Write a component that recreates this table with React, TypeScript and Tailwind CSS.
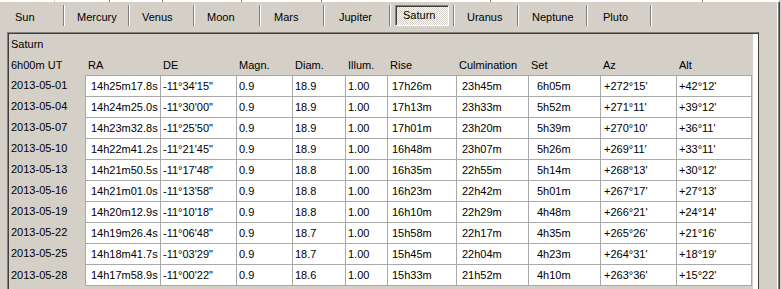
import React from "react";

type Col = { label: string; w: string; pl: string };

const cols: Col[] = [
  { label: "RA", w: "w-[75px]", pl: "pl-[5px]" },
  { label: "DE", w: "w-[76px]", pl: "pl-[2px]" },
  { label: "Magn.", w: "w-[56px]", pl: "pl-[2px]" },
  { label: "Diam.", w: "w-[53px]", pl: "pl-[2px]" },
  { label: "Illum.", w: "w-[42px]", pl: "pl-[2px]" },
  { label: "Rise", w: "w-[69px]", pl: "pl-[4px]" },
  { label: "Culmination", w: "w-[72px]", pl: "pl-[5px]" },
  { label: "Set", w: "w-[72px]", pl: "pl-[8px]" },
  { label: "Az", w: "w-[76px]", pl: "pl-[3px]" },
  { label: "Alt", w: "w-[76px]", pl: "pl-[2px]" },
];

const rows: string[][] = [
  ["2013-05-01", "14h25m17.8s", "-11°34'15\"", "0.9", "18.9", "1.00", "17h26m", "23h45m", "6h05m", "+272°15'", "+42°12'"],
  ["2013-05-04", "14h24m25.0s", "-11°30'00\"", "0.9", "18.9", "1.00", "17h13m", "23h33m", "5h52m", "+271°11'", "+39°12'"],
  ["2013-05-07", "14h23m32.8s", "-11°25'50\"", "0.9", "18.9", "1.00", "17h01m", "23h20m", "5h39m", "+270°10'", "+36°11'"],
  ["2013-05-10", "14h22m41.2s", "-11°21'45\"", "0.9", "18.9", "1.00", "16h48m", "23h07m", "5h26m", "+269°11'", "+33°11'"],
  ["2013-05-13", "14h21m50.5s", "-11°17'48\"", "0.9", "18.8", "1.00", "16h35m", "22h55m", "5h14m", "+268°13'", "+30°12'"],
  ["2013-05-16", "14h21m01.0s", "-11°13'58\"", "0.9", "18.8", "1.00", "16h23m", "22h42m", "5h01m", "+267°17'", "+27°13'"],
  ["2013-05-19", "14h20m12.9s", "-11°10'18\"", "0.9", "18.8", "1.00", "16h10m", "22h29m", "4h48m", "+266°21'", "+24°14'"],
  ["2013-05-22", "14h19m26.4s", "-11°06'48\"", "0.9", "18.7", "1.00", "15h58m", "22h17m", "4h35m", "+265°26'", "+21°16'"],
  ["2013-05-25", "14h18m41.7s", "-11°03'29\"", "0.9", "18.7", "1.00", "15h45m", "22h04m", "4h23m", "+264°31'", "+18°19'"],
  ["2013-05-28", "14h17m58.9s", "-11°00'22\"", "0.9", "18.6", "1.00", "15h33m", "21h52m", "4h10m", "+263°36'", "+15°22'"],
];

const tabs = [
  { label: "Sun", w: "w-[60px]", pl: "pl-[12px]" },
  { label: "Mercury", w: "w-[63px]", pl: "pl-[12px]" },
  { label: "Venus", w: "w-[63px]", pl: "pl-[12px]" },
  { label: "Moon", w: "w-[64px]", pl: "pl-[12px]" },
  { label: "Mars", w: "w-[62px]", pl: "pl-[13px]" },
  { label: "Jupiter", w: "w-[64px]", pl: "pl-[14px]" },
  { label: "Saturn", w: "w-[62px]", pl: "pl-[4px]", active: true },
  { label: "Uranus", w: "w-[62px]", pl: "pl-[12px]" },
  { label: "Neptune", w: "w-[67px]", pl: "pl-[13px]" },
  { label: "Pluto", w: "w-[62px]", pl: "pl-[15px]" },
];

// bottoms of the cut-off tab row above
const topSegments = [
  { w: "w-[54px]", tick: "bg-[#d4d0c8]" },
  { w: "w-[54px]", tick: "bg-[#808080]" },
  { w: "w-[52px]", tick: "bg-[#808080]" },
  { w: "w-[78px]", tick: "bg-[#808080]" },
  { w: "w-[79px]", tick: "bg-[#808080]" },
  { w: "w-[168px]", tick: "bg-[#808080]" },
  { w: "w-[211px]", tick: "bg-[#808080]" },
  { w: "w-[76px]", tick: "" },
];

function Separator() {
  return <div className="h-[21px] w-[2px] shrink-0 border-l border-r border-l-[#808080] border-r-white" />;
}

export default function App() {
  return (
    <div
      className="h-[289px] w-[782px] overflow-hidden bg-[#d4d0c8] text-[11px] text-black"
      style={{ fontFamily: '"Liberation Sans", Arial, sans-serif' }}
    >
      <div className="flex h-[2px]">
        {topSegments.map((s, i) => (
          <React.Fragment key={i}>
            <div className={`h-full shrink-0 bg-white ${s.w}`} />
            {s.tick && <div className={`h-full w-[1px] shrink-0 ${s.tick}`} />}
          </React.Fragment>
        ))}
      </div>

      <div className="flex h-[287px]">
        <div className="flex w-[777px] shrink-0 flex-col">
          {/* planet tabs */}
          <div className="flex h-[30px] shrink-0 items-start pl-[3px] pt-[3px]">
            {tabs.map((t) => (
              <React.Fragment key={t.label}>
                {t.active ? (
                  <div className={`h-[21px] shrink-0 ${t.w} ${t.pl}`}>
                    <div className="h-[21px] w-[54px] border-l border-t border-b border-r border-l-[#808080] border-t-[#808080] border-b-white border-r-white">
                      <div className="flex h-full items-center border-l border-t border-[#404040] bg-[repeating-conic-gradient(#ffffff_0%_25%,#d4d0c8_0%_50%)] bg-[length:2px_2px] pl-[6px] pb-[1px]">
                        {t.label}
                      </div>
                    </div>
                  </div>
                ) : (
                  <div className={`flex h-[21px] shrink-0 items-center pt-[3px] ${t.w} ${t.pl}`}>
                    {t.label}
                  </div>
                )}
                <Separator />
              </React.Fragment>
            ))}
          </div>

          {/* sunken table panel */}
          <div className="ml-[7px] w-[752px] flex-1 border-l border-t border-r border-l-[#808080] border-t-[#808080] border-r-[#404040]">
            <div className="flex h-full border-l border-t border-[#404040]">
              <div className="w-[744px] shrink-0">
                <div className="flex h-[21px] items-center pl-[2px]">Saturn</div>
                <div className="flex h-[20px]">
                  <div className="flex w-[76px] shrink-0 items-center pl-[2px]">6h00m UT</div>
                  {cols.map((c) => (
                    <div key={c.label} className={`flex shrink-0 items-center pl-[3px] ${c.w}`}>
                      {c.label}
                    </div>
                  ))}
                </div>
                {rows.map((r, ri) => {
                  const last = ri === rows.length - 1;
                  return (
                    <div key={r[0]} className={`flex ${last ? "h-[22px]" : "h-[21px]"}`}>
                      <div className="flex w-[76px] shrink-0 items-center pl-[2px]">{r[0]}</div>
                      {cols.map((c, ci) => (
                        <div
                          key={c.label}
                          className={`relative flex shrink-0 items-center overflow-hidden whitespace-nowrap border-l border-t border-[#a9a9a9] bg-white ${c.w} ${c.pl} ${last ? "border-b" : ""} ${ci === cols.length - 1 ? "border-r" : ""}`}
                        >
                          {r[ci + 1]}
                          {ri === 0 && ci === 0 && (
                            <span className="absolute inset-[-1px] border border-dotted border-black" />
                          )}
                        </div>
                      ))}
                    </div>
                  );
                })}
              </div>
              <div className="w-[5px] shrink-0 bg-white" />
            </div>
          </div>
        </div>
        <div className="w-[1px] shrink-0 bg-white" />
        <div className="w-[1px] shrink-0 bg-[#808080]" />
        <div className="w-[1px] shrink-0 bg-[#404040]" />
      </div>
    </div>
  );
}
